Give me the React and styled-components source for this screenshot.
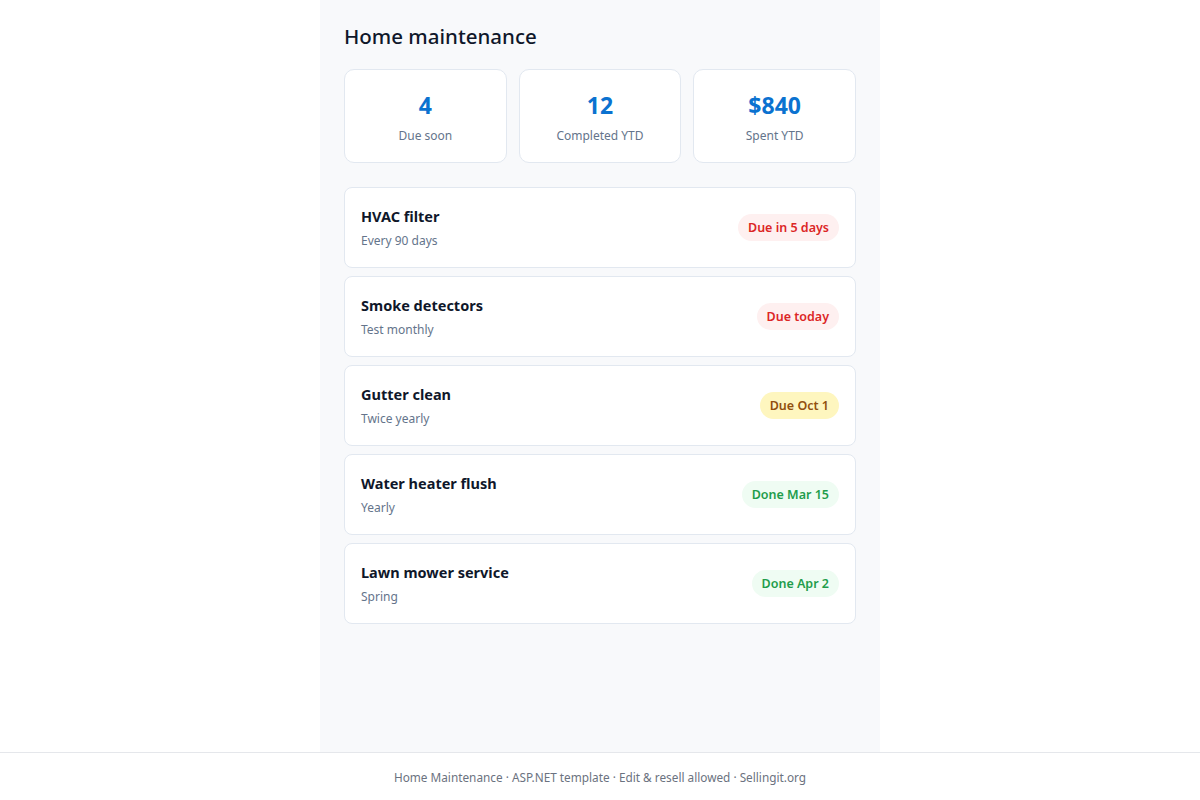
import React from 'react';
import styled, { createGlobalStyle } from 'styled-components';

const GlobalStyle = createGlobalStyle`
  html, body {
    margin: 0;
    padding: 0;
    background: #ffffff;
    font-family: "Noto Sans", "Open Sans", "Liberation Sans", sans-serif;
    color: #0f172a;
  }
  * { box-sizing: border-box; }
`;

const Page = styled.div`
  display: flex;
  flex-direction: column;
  min-height: 800px;
`;

const Main = styled.main`
  flex: 1;
  width: 560px;
  margin: 0 auto;
  background: #f8f9fb;
  padding: 21px 24px 24px;
`;

const Title = styled.h1`
  margin: 0 0 18px;
  font-size: 20.5px;
  font-weight: 500;
  line-height: 30px;
  color: #0f172a;
`;

const Stats = styled.div`
  display: grid;
  grid-template-columns: repeat(3, 1fr);
  gap: 12px;
  margin-bottom: 24px;
`;

const StatCard = styled.div`
  background: #ffffff;
  border: 1px solid #e2e8f0;
  border-radius: 10px;
  height: 94px;
  display: flex;
  flex-direction: column;
  align-items: center;
  justify-content: center;
  gap: 8px;
  padding-top: 4px;
`;

const StatValue = styled.div`
  font-size: 23px;
  font-weight: 700;
  line-height: 28px;
  color: #0b72d0;
`;

const StatLabel = styled.div`
  font-size: 12px;
  line-height: 18px;
  color: #64748b;
`;

const List = styled.div`
  display: flex;
  flex-direction: column;
  gap: 8px;
`;

const Row = styled.div`
  background: #ffffff;
  border: 1px solid #e2e8f0;
  border-radius: 8px;
  height: 81px;
  padding: 0 16px;
  display: flex;
  align-items: center;
  justify-content: space-between;
`;

const RowText = styled.div`
  display: flex;
  flex-direction: column;
  gap: 6px;
`;

const RowTitle = styled.div`
  font-size: 14.5px;
  font-weight: 700;
  line-height: 20px;
  color: #0f172a;
`;

const RowSub = styled.div`
  font-size: 12px;
  line-height: 18px;
  color: #64748b;
`;

const tones = {
  red: { bg: '#fef0f0', fg: '#dc2626' },
  amber: { bg: '#fef6bf', fg: '#92500e' },
  green: { bg: '#effcf3', fg: '#1f9d4c' },
};

const Badge = styled.span`
  display: inline-flex;
  align-items: center;
  height: 27px;
  padding: 0 10px;
  border-radius: 999px;
  font-size: 12.5px;
  font-weight: 600;
  background: ${(p) => tones[p.$tone].bg};
  color: ${(p) => tones[p.$tone].fg};
`;

const Footer = styled.footer`
  border-top: 1px solid #e5e7eb;
  height: 48px;
  display: flex;
  align-items: center;
  justify-content: center;
  font-size: 11.8px;
  color: #6b7280;
`;

const stats = [
  { value: '4', label: 'Due soon' },
  { value: '12', label: 'Completed YTD' },
  { value: '$840', label: 'Spent YTD' },
];

const tasks = [
  { name: 'HVAC filter', every: 'Every 90 days', status: 'Due in 5 days', tone: 'red' },
  { name: 'Smoke detectors', every: 'Test monthly', status: 'Due today', tone: 'red' },
  { name: 'Gutter clean', every: 'Twice yearly', status: 'Due Oct 1', tone: 'amber' },
  { name: 'Water heater flush', every: 'Yearly', status: 'Done Mar 15', tone: 'green' },
  { name: 'Lawn mower service', every: 'Spring', status: 'Done Apr 2', tone: 'green' },
];

const App = () => (
  <Page>
    <GlobalStyle />
    <Main>
      <Title>Home maintenance</Title>
      <Stats>
        {stats.map((s) => (
          <StatCard key={s.label}>
            <StatValue>{s.value}</StatValue>
            <StatLabel>{s.label}</StatLabel>
          </StatCard>
        ))}
      </Stats>
      <List>
        {tasks.map((t) => (
          <Row key={t.name}>
            <RowText>
              <RowTitle>{t.name}</RowTitle>
              <RowSub>{t.every}</RowSub>
            </RowText>
            <Badge $tone={t.tone}>{t.status}</Badge>
          </Row>
        ))}
      </List>
    </Main>
    <Footer>Home Maintenance · ASP.NET template · Edit &amp; resell allowed · Sellingit.org</Footer>
  </Page>
);

export default App;
